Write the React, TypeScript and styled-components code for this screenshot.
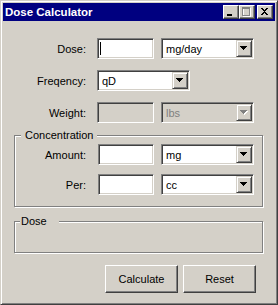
import React from "react";
import styled, { createGlobalStyle } from "styled-components";

const Global = createGlobalStyle`
  html, body { margin: 0; padding: 0; background: #d4d0c8; }
  body { font-family: "Liberation Sans", Arial, sans-serif; font-size: 11px; }
`;

const Window = styled.div`
  box-sizing: border-box;
  width: 278px;
  height: 305px;
  background: #d4d0c8;
  border: 1px solid;
  border-color: #d4d0c8 #404040 #404040 #d4d0c8;
  box-shadow: inset 1px 1px 0 #fff, inset -1px -1px 0 #808080;
  padding: 2px;
  display: flex;
  flex-direction: column;
  color: #000;
  font-family: "Liberation Sans", Arial, sans-serif;
  font-size: 11px;
`;

const TitleBar = styled.div`
  height: 18px;
  background: #000080;
  display: flex;
  align-items: center;
  padding: 0 2px;
`;

const Title = styled.div`
  flex: 1;
  color: #fff;
  font-weight: bold;
  font-size: 11.5px;
  white-space: nowrap;
`;

const CaptionButton = styled.div<{ $ml?: number }>`
  box-sizing: border-box;
  width: 16px;
  height: 14px;
  margin-left: ${(p) => p.$ml ?? 0}px;
  background: #d4d0c8;
  border: 1px solid;
  border-color: #fff #404040 #404040 #fff;
  box-shadow: inset -1px -1px 0 #808080;
  display: flex;
  svg { display: block; margin: -1px 0 0 -1px; }
`;

const Body = styled.div`
  display: flex;
  flex-direction: column;
  padding-top: 17px;
`;

const Rows = styled.div`
  display: flex;
  flex-direction: column;
  gap: 11px;
`;

const Row = styled.div`
  display: flex;
  align-items: center;
  height: 21px;
`;

const Label = styled.div<{ $w: number; $mr: number; $disabled?: boolean }>`
  width: ${(p) => p.$w}px;
  margin-right: ${(p) => p.$mr}px;
  text-align: right;
  white-space: nowrap;
  color: #000;
`;

const sunken = `
  box-sizing: border-box;
  height: 21px;
  border: 1px solid;
  border-color: #808080 #fff #fff #808080;
  box-shadow: inset 1px 1px 0 #404040, inset -1px -1px 0 #d4d0c8;
  padding: 1px;
`;

const TextBox = styled.div<{ $w: number; $disabled?: boolean }>`
  ${sunken}
  width: ${(p) => p.$w}px;
  background: ${(p) => (p.$disabled ? "#d4d0c8" : "#fff")};
  display: flex;
  align-items: center;
  padding-left: 2px;
`;

const Caret = styled.span`
  display: inline-block;
  width: 1px;
  height: 13px;
  background: #000;
`;

const Combo = styled.div<{ $ml?: number; $disabled?: boolean }>`
  ${sunken}
  width: 93px;
  margin-left: ${(p) => p.$ml ?? 0}px;
  background: ${(p) => (p.$disabled ? "#d4d0c8" : "#fff")};
  color: ${(p) => (p.$disabled ? "#808080" : "#000")};
  display: flex;
  align-items: stretch;
`;

const ComboText = styled.div`
  flex: 1;
  display: flex;
  align-items: center;
  padding-left: 3px;
  white-space: nowrap;
`;

const DropButton = styled.div`
  box-sizing: border-box;
  width: 16px;
  height: 17px;
  background: #d4d0c8;
  border: 1px solid;
  border-color: #d4d0c8 #404040 #404040 #d4d0c8;
  box-shadow: inset 1px 1px 0 #fff, inset -1px -1px 0 #808080;
  display: flex;
  align-items: center;
  justify-content: center;
`;

const Group = styled.div<{ $mt: number; $h?: number }>`
  position: relative;
  box-sizing: border-box;
  margin: ${(p) => p.$mt}px 0 0 11px;
  width: 249px;
  ${(p) => (p.$h ? `height: ${p.$h}px;` : "")}
  border: 1px solid #808080;
  box-shadow: inset 1px 1px 0 #fff, 1px 1px 0 #fff;
  padding: 8px 0 11px 0;
  display: flex;
  flex-direction: column;
  gap: 9px;
`;

const Caption = styled.div<{ $left: number; $pl: number; $pr: number }>`
  position: absolute;
  top: -7px;
  left: ${(p) => p.$left}px;
  padding: 0 ${(p) => p.$pr}px 0 ${(p) => p.$pl}px;
  background: #d4d0c8;
  line-height: 13px;
  white-space: nowrap;
`;

const ButtonRow = styled.div`
  display: flex;
  justify-content: flex-end;
  gap: 5px;
  margin-top: 12px;
  padding-right: 19px;
`;

const PushButton = styled.button`
  box-sizing: border-box;
  width: 73px;
  height: 28px;
  background: #d4d0c8;
  border: 1px solid;
  border-color: #fff #404040 #404040 #fff;
  box-shadow: inset -1px -1px 0 #808080;
  font-family: "Liberation Sans", Arial, sans-serif;
  font-size: 11px;
  color: #000;
  padding: 0;
  margin: 0;
`;

const Arrow = ({ disabled }: { disabled?: boolean }) => (
  <svg width="8" height="5" viewBox="0 0 8 5" shapeRendering="crispEdges">
    {disabled && (
      <g fill="#fff">
        <rect x="1" y="1" width="7" height="1" />
        <rect x="2" y="2" width="5" height="1" />
        <rect x="3" y="3" width="3" height="1" />
        <rect x="4" y="4" width="1" height="1" />
      </g>
    )}
    <g fill={disabled ? "#808080" : "#000"}>
      <rect x="0" y="0" width="7" height="1" />
      <rect x="1" y="1" width="5" height="1" />
      <rect x="2" y="2" width="3" height="1" />
      <rect x="3" y="3" width="1" height="1" />
    </g>
  </svg>
);

const MinGlyph = () => (
  <svg width="16" height="14" viewBox="0 0 16 14" shapeRendering="crispEdges">
    <rect x="4" y="9" width="6" height="2" fill="#000" />
  </svg>
);

const MaxGlyph = () => (
  <svg width="16" height="14" viewBox="0 0 16 14" shapeRendering="crispEdges">
    <g fill="none" stroke="#fff" strokeWidth="1">
      <rect x="4.5" y="3.5" width="8" height="8" />
    </g>
    <rect x="4" y="3" width="9" height="1" fill="#fff" />
    <g fill="none" stroke="#808080" strokeWidth="1">
      <rect x="3.5" y="2.5" width="8" height="8" />
    </g>
    <rect x="3" y="2" width="9" height="2" fill="#808080" />
  </svg>
);

const CloseGlyph = () => (
  <svg width="16" height="14" viewBox="0 0 16 14" shapeRendering="crispEdges">
    <g fill="#000">
      <rect x="4" y="3" width="2" height="1" />
      <rect x="10" y="3" width="2" height="1" />
      <rect x="5" y="4" width="2" height="1" />
      <rect x="9" y="4" width="2" height="1" />
      <rect x="6" y="5" width="4" height="1" />
      <rect x="7" y="6" width="2" height="1" />
      <rect x="6" y="7" width="4" height="1" />
      <rect x="5" y="8" width="2" height="1" />
      <rect x="9" y="8" width="2" height="1" />
      <rect x="4" y="9" width="2" height="1" />
      <rect x="10" y="9" width="2" height="1" />
    </g>
  </svg>
);

const ComboBox = ({ value, ml, disabled }: { value: string; ml?: number; disabled?: boolean }) => (
  <Combo $ml={ml} $disabled={disabled}>
    <ComboText>{value}</ComboText>
    <DropButton>
      <Arrow disabled={disabled} />
    </DropButton>
  </Combo>
);

export default function App() {
  return (
    <>
      <Global />
      <Window>
        <TitleBar>
          <Title>Dose Calculator</Title>
          <CaptionButton>
            <MinGlyph />
          </CaptionButton>
          <CaptionButton>
            <MaxGlyph />
          </CaptionButton>
          <CaptionButton $ml={2}>
            <CloseGlyph />
          </CaptionButton>
        </TitleBar>
        <Body>
          <Rows>
            <Row>
              <Label $w={83} $mr={11}>Dose:</Label>
              <TextBox $w={57}>
                <Caret />
              </TextBox>
              <ComboBox value="mg/day" ml={7} />
            </Row>
            <Row>
              <Label $w={83} $mr={11}>Freqency:</Label>
              <ComboBox value="qD" />
            </Row>
            <Row>
              <Label $w={83} $mr={11}>Weight:</Label>
              <TextBox $w={57} $disabled />
              <ComboBox value="lbs" ml={7} disabled />
            </Row>
          </Rows>
          <Group $mt={12}>
            <Caption $left={6} $pl={4} $pr={3}>Concentration</Caption>
            <Row>
              <Label $w={71} $mr={12}>Amount:</Label>
              <TextBox $w={56} />
              <ComboBox value="mg" ml={7} />
            </Row>
            <Row>
              <Label $w={71} $mr={12}>Per:</Label>
              <TextBox $w={56} />
              <ComboBox value="cc" ml={7} />
            </Row>
          </Group>
          <Group $mt={14} $h={32}>
            <Caption $left={5} $pl={1} $pr={12}>Dose</Caption>
          </Group>
          <ButtonRow>
            <PushButton>Calculate</PushButton>
            <PushButton>Reset</PushButton>
          </ButtonRow>
        </Body>
      </Window>
    </>
  );
}
